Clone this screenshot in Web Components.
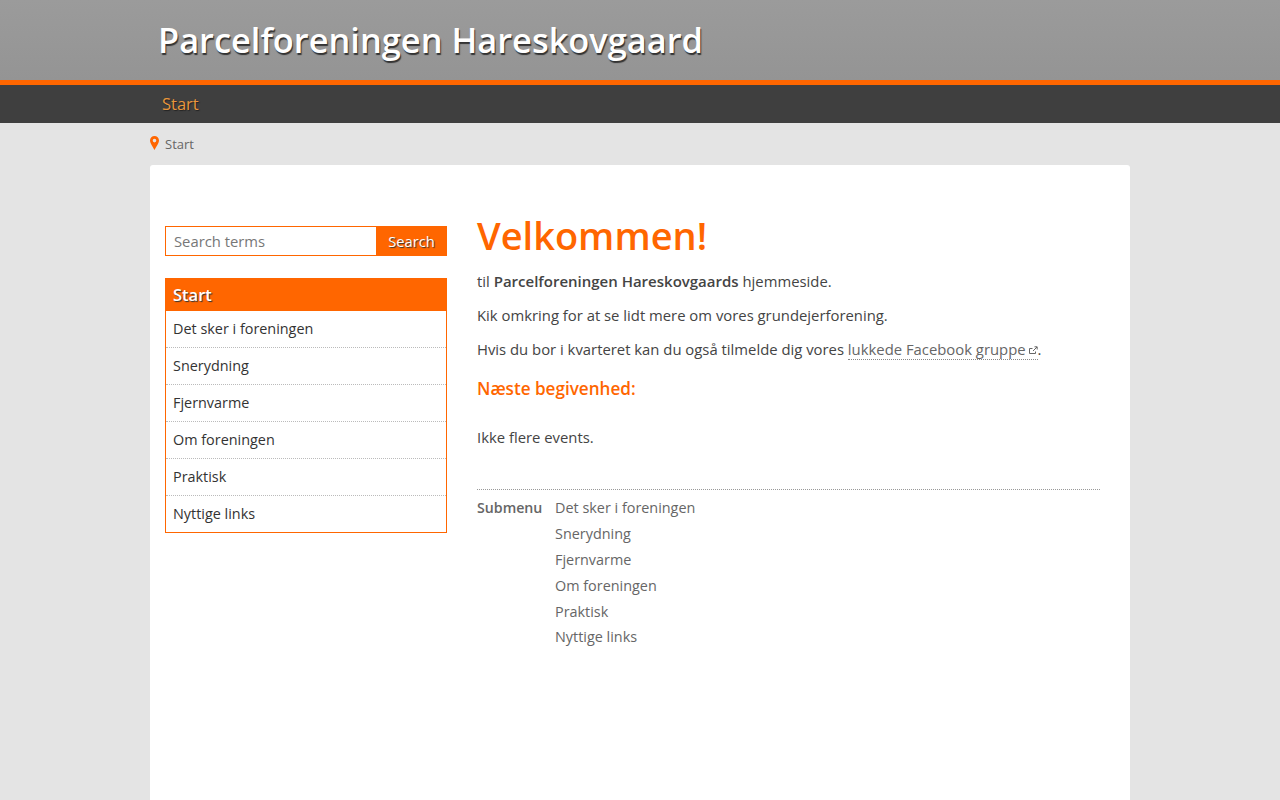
<!DOCTYPE html>
<html lang="da">
<head>
<meta charset="utf-8">
<title>Parcelforeningen Hareskovgaard</title>
<style>
  html, body { margin: 0; padding: 0; height: 100%; overflow: hidden; }
  body { background: #e4e4e4; font-family: "Open Sans", sans-serif; color: #444; }
</style>
</head>
<body>
<site-header title="Parcelforeningen Hareskovgaard"></site-header>
<site-nav label="Start"></site-nav>
<site-crumb label="Start"></site-crumb>
<page-card>
  <div slot="side">
    <search-box></search-box>
    <side-menu title="Start" items="Det sker i foreningen|Snerydning|Fjernvarme|Om foreningen|Praktisk|Nyttige links"></side-menu>
  </div>
  <main-content></main-content>
</page-card>

<script>
class SiteHeader extends HTMLElement {
  constructor() {
    super();
    this.attachShadow({ mode: "open" });
    this.shadowRoot.innerHTML = `
    <style>
      :host { display: block; height: 80px; background: linear-gradient(#9b9b9b, #949494); border-bottom: 5px solid #f60; }
      h1 {
        margin: 0 0 0 158px; padding-top: 16px;
        font: 600 34.400px/47px "Open Sans", sans-serif; color: #fff;
        text-shadow: 1px 2px 1px #333; white-space: nowrap;
      }
    </style>
    <h1>${this.getAttribute("title")}</h1>`;
  }
}

class SiteNav extends HTMLElement {
  constructor() {
    super();
    this.attachShadow({ mode: "open" });
    this.shadowRoot.innerHTML = `
    <style>
      :host { display: block; height: 38px; background: #3f3f3f; }
      div { width: 956px; margin: 0 auto; font: 16.500px/38px "Open Sans", sans-serif; color: #e8963c; text-shadow: 1px 1px 1px #222; }
    </style>
    <div>${this.getAttribute("label")}</div>`;
  }
}

class SiteCrumb extends HTMLElement {
  constructor() {
    super();
    this.attachShadow({ mode: "open" });
    this.shadowRoot.innerHTML = `
    <style>
      :host { display: flex; align-items: center; gap: 6px; width: 980px; height: 42px; margin: 0 auto; font: 13px "Open Sans", sans-serif; color: #666; }
      svg { width: 9px; height: 14px; margin-top: -2px; }
    </style>
    <svg viewBox="0 0 9 14"><path fill="#f60" fill-rule="evenodd" d="M4.500 0A4.500 4.500 0 0 0 0 4.500C0 7 3.200 11.500 4.500 14 5.800 11.500 9 7 9 4.500A4.500 4.500 0 0 0 4.500 0zm0 2.800a1.800 1.800 0 1 1 0 3.600 1.800 1.800 0 0 1 0-3.600z"/></svg>
    <span>${this.getAttribute("label")}</span>`;
  }
}

class PageCard extends HTMLElement {
  constructor() {
    super();
    this.attachShadow({ mode: "open" });
    this.shadowRoot.innerHTML = `
    <style>
      :host { display: grid; grid-template-columns: 282px 1fr; column-gap: 30px; width: 980px; height: 640px; box-sizing: border-box; margin: 0 auto; padding: 0 30px 0 15px; background: #fff; border-radius: 3px 3px 0 0; }
      aside { padding-top: 61px; }
    </style>
    <aside><slot name="side"></slot></aside>
    <section><slot></slot></section>`;
  }
}

class SearchBox extends HTMLElement {
  constructor() {
    super();
    this.attachShadow({ mode: "open" });
    this.shadowRoot.innerHTML = `
    <style>
      :host { display: flex; height: 30px; box-sizing: border-box; border: 1px solid #f60; margin-bottom: 22px; font: 14.800px "Open Sans", sans-serif; }
      span { flex: 1; padding-left: 8px; line-height: 28px; color: #777; }
      b { width: 71px; margin: -1px -1px -1px 0; background: #f60; color: #fff; font-weight: 400; font-size: 14.700px; line-height: 30px; text-align: center; text-shadow: 1px 1px 1px #333; }
    </style>
    <span>Search terms</span><b>Search</b>`;
  }
}

class SideMenu extends HTMLElement {
  constructor() {
    super();
    this.attachShadow({ mode: "open" });
    const rows = this.getAttribute("items").split("|").map((t) => `<li>${t}</li>`).join("");
    this.shadowRoot.innerHTML = `
    <style>
      :host { display: block; box-sizing: border-box; border: 1px solid #f60; font: 14.400px "Open Sans", sans-serif; color: #333; }
      h2 { margin: 0; height: 32px; padding-left: 7px; background: #f60; color: #fff; font: 600 16.500px/32px "Open Sans", sans-serif; text-shadow: 1px 1px 1px #333; }
      ul { margin: 0; padding: 0; list-style: none; }
      li { height: 36px; line-height: 35px; padding-left: 7px; border-bottom: 1px dotted #bbb; }
      li:last-child { border-bottom: 0; }
    </style>
    <h2>${this.getAttribute("title")}</h2>
    <ul>${rows}</ul>`;
  }
}

class MainContent extends HTMLElement {
  constructor() {
    super();
    this.attachShadow({ mode: "open" });
    this.shadowRoot.innerHTML = `
    <style>
      :host { display: block; font: 14.850px/24px "Open Sans", sans-serif; color: #444; padding-top: 46px; }
      h1 { margin: 0 0 10px; font: 600 38px/48px "Open Sans", sans-serif; color: #f60; }
      p { margin: 0 0 10px; }
      b { font-weight: 600; }
      p b { font-size: 15px; }
      a { color: #666; text-decoration: none; border-bottom: 1px dotted #888; }
      a svg { width: 9px; height: 9px; margin-left: 3px; }
      h3 { margin: 16px 0 0; font: 600 17.100px/24px "Open Sans", sans-serif; color: #f60; }
      .events { margin-top: 24px; }
      .sub { display: flex; margin-top: 40px; border-top: 1px dotted #999; padding-top: 5px; font-size: 14.400px; line-height: 25.880px; color: #666; }
      .sub b { width: 78px; font-size: 14.200px; }
      .sub ul { margin: 0; padding: 0; list-style: none; }
    </style>
    <h1>Velkommen!</h1>
    <p>til <b>Parcelforeningen Hareskovgaards</b> hjemmeside.</p>
    <p>Kik omkring for at se lidt mere om vores grundejerforening.</p>
    <p>Hvis du bor i kvarteret kan du også tilmelde dig vores <a>lukkede Facebook gruppe<svg viewBox="0 0 9 9" fill="none" stroke="#666"><path d="M6.500 5.500v2h-6v-5h3M4 5l4-4M5.500 .8h2.700v2.700"/></svg></a>.</p>
    <h3>Næste begivenhed:</h3>
    <p class="events">Ikke flere events.</p>
    <div class="sub">
      <b>Submenu</b>
      <ul><li>Det sker i foreningen</li><li>Snerydning</li><li>Fjernvarme</li><li>Om foreningen</li><li>Praktisk</li><li>Nyttige links</li></ul>
    </div>`;
  }
}

customElements.define("site-header", SiteHeader);
customElements.define("site-nav", SiteNav);
customElements.define("site-crumb", SiteCrumb);
customElements.define("page-card", PageCard);
customElements.define("search-box", SearchBox);
customElements.define("side-menu", SideMenu);
customElements.define("main-content", MainContent);
</script>
</body>
</html>
